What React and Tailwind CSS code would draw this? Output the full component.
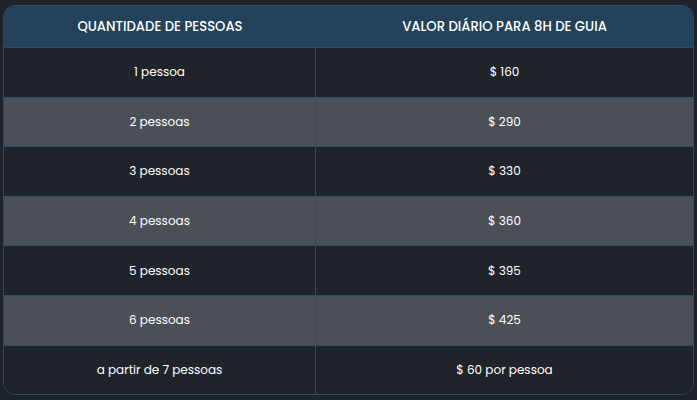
import React from "react";

const rows = [
  ["1 pessoa", "$ 160"],
  ["2 pessoas", "$ 290"],
  ["3 pessoas", "$ 330"],
  ["4 pessoas", "$ 360"],
  ["5 pessoas", "$ 395"],
  ["6 pessoas", "$ 425"],
  ["a partir de 7 pessoas", "$ 60 por pessoa"],
];

export default function App() {
  return (
    <div
      className="w-[697px] h-[400px] bg-[#1e2229] pt-[5px] pl-[3px] text-white"
      style={{ fontFamily: '"Poppins", "Open Sans", "Noto Sans", sans-serif' }}
    >
      <div className="w-[691px] rounded-[12px] border border-[#23506e] overflow-hidden bg-[#1f242b]">
        <div className="grid grid-cols-[312px_1fr] h-[41px] bg-[#24435a] text-[13.2px] font-medium items-center">
          <div className="text-center">QUANTIDADE DE PESSOAS</div>
          <div className="text-center">VALOR DIÁRIO PARA 8H DE GUIA</div>
        </div>
        {rows.map(([a, b], i) => (
          <div
            key={i}
            className={`grid grid-cols-[312px_1fr] h-[49.6px] border-t border-[#23506e] text-[12px] font-normal ${
              i % 2 === 1 ? "bg-[#4b5057]" : "bg-[#1f242b]"
            }`}
          >
            <div className="flex items-center justify-center border-r border-[#23506e]">{a}</div>
            <div className="flex items-center justify-center">{b}</div>
          </div>
        ))}
      </div>
    </div>
  );
}
